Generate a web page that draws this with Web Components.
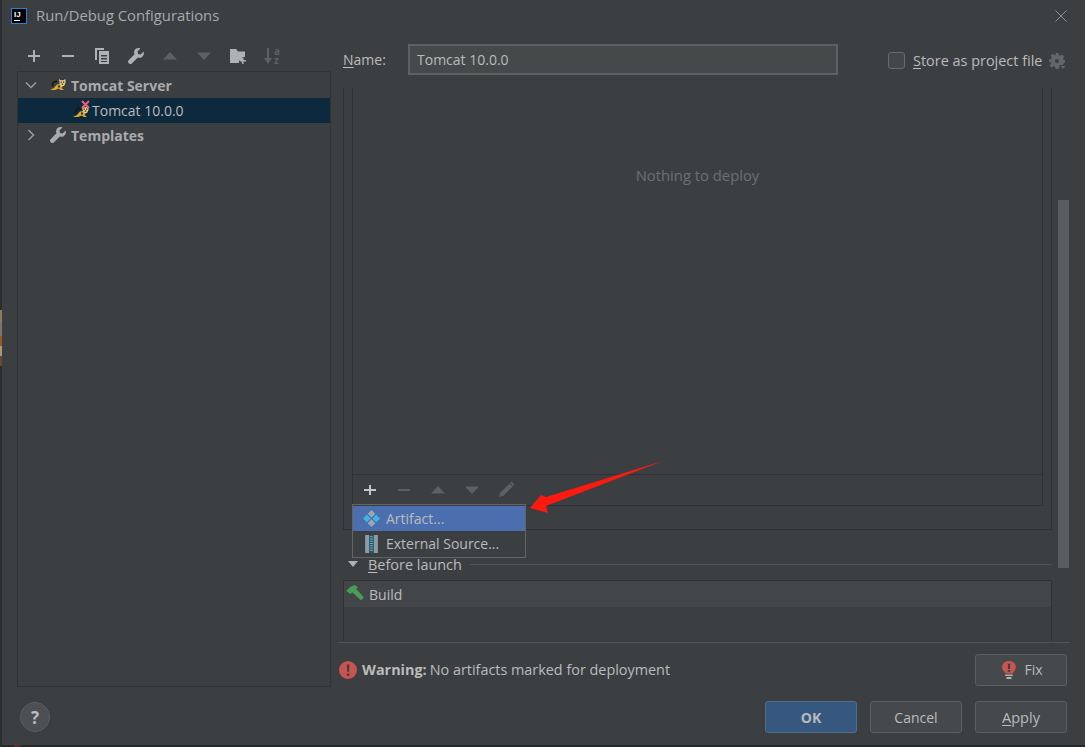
<!DOCTYPE html>
<html>
<head>
<meta charset="utf-8">
<title>Run/Debug Configurations</title>
<style>
  html, body { margin: 0; padding: 0; }
  body {
    width: 1085px; height: 747px; overflow: hidden; font-family: "Open Sans", "Liberation Sans", sans-serif;
    background:
      linear-gradient(#2b2c2d 0 310px, #8f7a5c 310px 322px, #77776f 322px 336px, #95591f 336px 346px, #a89a7a 346px 356px, #6a4a2e 356px 366px, #2b2c2d 366px) left top / 2px 747px no-repeat,
      linear-gradient(90deg, #26282a 0 14px, #5a2a2a 14px 21px, #26282a 21px) left bottom / 1085px 2px no-repeat,
      #2b2c2d;
  }
</style>
</head>
<body>
<script>
const ACTIVE = '#afb1b3';
const DIM = '#5d6163';

const ICONS = {
  plus: `<path fill="${ACTIVE}" d="M7 2h2v12H7z M2 7h12v2H2z"/>`,
  'plus-w': `<path fill="#c4c6c8" d="M7 3h2v10H7z M2 7h12v2H2z"/>`,
  minus: `<path fill="${ACTIVE}" d="M2 7h12v2H2z"/>`,
  'minus-dim': `<path fill="${DIM}" d="M2 7h12v2H2z"/>`,
  copy: `<path fill="${ACTIVE}" d="M1 0h9v2H3v10H1z"/><path fill="${ACTIVE}" fill-rule="evenodd" d="M5 3h10v13H5z M7 7v1.500h6V7z M7 10v1.500h6V10z M7 13v1h6v-1z"/>`,
  wrench: `<path fill="${ACTIVE}" d="M15.600 3.600 12.600 6.500 10 6 9.500 3.400 12.400.4C10 -.4 7.600.3 6.600 2.200 5.900 3.500 6 5 6.500 6.200L.6 12.200c-.8.8-.8 2 0 2.800l.4.4c.8.8 2 .8 2.800 0l6-6c1.300.5 2.700.5 3.900-.2 1.900-1 2.700-3.600 1.900-5.600z"/>`,
  up: `<path fill="${DIM}" d="M8 4l7 7.500H1z"/>`,
  down: `<path fill="${DIM}" d="M1 4.500h14L8 12z"/>`,
  folder: `<path fill="${ACTIVE}" d="M0 1h6l2 2.500h7V9h-3v3H9v3H0z"/><path fill="${ACTIVE}" d="M12 9.500h1.500V12H16v1.500h-2.500V16H12v-2.500H9.500V12H12z"/>`,
  pencil: `<path fill="${DIM}" d="M11.500 1.500 14.500 4.500 5 14l-4 1 1-4z M12.500.5c.6-.6 1.400-.6 2 0l1 1c.6.6.6 1.400 0 2l-.5.5-3-3z"/>`,
  close: `<path stroke="#8c8e90" stroke-width="1" fill="none" d="M2.500 2.500l11 11M13.500 2.500l-11 11"/>`,
  chevdown: `<path stroke="#9a9c9e" stroke-width="1.500" fill="none" d="M3 5.500l5 5 5-5"/>`,
  chevright: `<path stroke="#9a9c9e" stroke-width="1.500" fill="none" d="M5.500 3l5 5-5 5"/>`,
  tri: `<path fill="#afb1b3" d="M3 5h10l-5 6z"/>`,
  tomcat: `<path stroke="#141414" stroke-width="1.500" fill="none" d="M7 4.500C4 4 2 6 2.500 9.500"/>
    <path fill="#e0a92e" d="M0 13 4 11 7 7.500 10 7 13 9 11.500 11 14 13 11 13 8.500 11.500 5 13Z"/>
    <path fill="#e6cf8e" d="M9 2 10.800 3.200H13.500L15.500 2V6L14 9H11L9.500 6Z"/>
    <path fill="#3a2a10" d="M10.500 4.500h1.300v1.300h-1.300z M13 4.500h1.300v1.300H13z M11.700 6.500h1.500v1.200h-1.500z M8 8.500h2v2H8z"/>`,
  wrenchtree: `<path fill="#a9abad" d="M15.600 3.600 12.600 6.500 10 6 9.500 3.400 12.400.4C10 -.4 7.600.3 6.600 2.200 5.900 3.500 6 5 6.500 6.200L.6 12.200c-.8.8-.8 2 0 2.800l.4.4c.8.8 2 .8 2.800 0l6-6c1.300.5 2.700.5 3.900-.2 1.900-1 2.700-3.600 1.900-5.600z"/>`,
  badx: `<path stroke="#e5606f" stroke-width="2.200" fill="none" d="M1 1l7 7M8 1L1 8"/>`,
  artifact: `<path fill="#40b6e0" d="M0 8l3.600-3.600L7.200 8l-3.600 3.600z M8.800 8l3.600-3.600L16 8l-3.600 3.600z"/><path fill="#9aa7b0" d="M4.400 3.600 8 0l3.600 3.600L8 7.200z M4.400 12.400 8 8.800l3.600 3.600L8 16z"/>`,
  zip: `<path fill="#8c9aa3" d="M2 0h4v16H2z M10 0h4v16h-4z"/><path fill="#33505f" d="M6 0h4v16H6z"/><path fill="#40b6e0" d="M6.500 1h3v1h-3zM6.500 3h3v1h-3zM6.500 5h3v1h-3zM6.500 7h3v1h-3zM6.500 9h3v1h-3zM6.500 11h3v1h-3zM6.500 13h3v1h-3z"/>`,
  hammer: `<path fill="#499c54" d="M4.700 1.500 8 0l3 2-1.500 1.500L16 11l-2.500 2.500L6 6.500 4.500 8 1 5z"/>`,
  warn: `<circle cx="8" cy="8" r="8" fill="#c75450"/><path fill="#3c3f41" d="M7 3h2.200l-.3 6.500H7.300zM7 11h2.200v2.200H7z"/>`,
  bulb: `<path fill="#c75450" d="M8 0c3.300 0 5.500 2.300 5.500 5.300 0 2.500-1.500 3.700-2.500 5.700H5C4 9 2.500 7.800 2.500 5.300 2.500 2.300 4.700 0 8 0z"/><path fill="#3c3f41" d="M7 2.500h2l-.2 4.500H7.200zM7 8h2v1.600H7z"/><path fill="#afb1b3" d="M5 12h6v1.300H5zM6 14.300h4V16H6z"/>`,
  gear: `<path fill="#636567" fill-rule="evenodd" d="M6.500 0h3l.4 2.200 1.500.6L13.200 1.500l2.100 2.100-1.300 1.800.6 1.500L16 7v3l-1.400.4-.6 1.500 1 1.500-2 2-1.600-1-1.500.6L9.500 16h-3l-.4-2.200-1.500-.6-1.800 1.300L.7 12.400 2 10.600l-.6-1.500L0 9V6.500l2.200-.4.6-1.500L1.500 2.800 3.600.7l1.800 1.300 1.500-.6z M8 6a2 2 0 1 0 0 4 2 2 0 0 0 0-4z"/><path fill="#3c3f41" d="M10.500 12h6.500v5h-6.500z"/><path fill="#636567" d="M11.500 13h5l-2.500 3z"/>`,
};

class IdeIcon extends HTMLElement {
  connectedCallback() {
    const size = this.getAttribute('size') || 16;
    const h = this.getAttribute('h') || size;
    const vb = this.getAttribute('vb') || '0 0 16 16';
    this.attachShadow({ mode: 'open' }).innerHTML = `
      <style>:host { display: inline-flex; flex: none; width: ${size}px; height: ${h}px; } svg { display: block; overflow: visible; }</style>
      <svg width="${size}" height="${h}" viewBox="${vb}" preserveAspectRatio="none">${ICONS[this.getAttribute('name')] || ''}</svg>`;
  }
}
customElements.define('ide-icon', IdeIcon);

class IdeButton extends HTMLElement {
  constructor() {
    super();
    this.attachShadow({ mode: 'open' }).innerHTML = `
      <style>
        :host { display: flex; box-sizing: border-box; width: 92px; height: 32px; align-items: center; justify-content: center; gap: 5px;
          background: #45494b; border: 1px solid #5b5e60; border-radius: 3px; color: #bbbbbb; font-size: 14px; }
        :host([primary]) { background: #365880; border-color: #4c708c; font-weight: 700; }
      </style>
      <slot></slot>`;
  }
}
customElements.define('ide-button', IdeButton);

class TitleBar extends HTMLElement {
  constructor() {
    super();
    this.attachShadow({ mode: 'open' }).innerHTML = `
      <style>
        :host { display: flex; align-items: center; height: 32px; flex: none; padding: 0 16px 0 9px; color: #a8aaac; font-size: 14.8px; }
        .logo { box-sizing: border-box; width: 16px; height: 16px; background: #000; border: 1px solid #2b7fd6; color: #fff; font: 700 8px/9px "Liberation Sans", sans-serif; padding: 1px 0 0 2px; margin-right: 9px; position: relative; }
        .logo::after { content: ""; position: absolute; left: 2px; bottom: 2px; width: 6px; height: 1px; background: #fff; }
        .t { flex: 1; position: relative; top: -1px; }
      </style>
      <div class="logo">IJ</div>
      <div class="t">Run/Debug Configurations</div>
      <ide-icon name="close" size="16"></ide-icon>`;
  }
}
customElements.define('title-bar', TitleBar);

// icon strip: buttons are 34px apart
class IconStrip extends HTMLElement {
  constructor() {
    super();
    this.attachShadow({ mode: 'open' }).innerHTML = `
      <style>
        :host { display: flex; align-items: center; gap: var(--strip-gap, 18px); }
      </style>
      <slot></slot>`;
  }
}
customElements.define('icon-strip', IconStrip);

class TreeRow extends HTMLElement {
  constructor() {
    super();
    this.attachShadow({ mode: 'open' }).innerHTML = `
      <style>
        :host { display: flex; align-items: center; height: 25px; color: #bbbbbb; font-size: 14px; }
        :host([bold]) { font-weight: 700; color: #a9abad; }
        :host([selected]) { background: #0d293e; }
      </style>
      <slot></slot>`;
  }
}
customElements.define('tree-row', TreeRow);

class ConfigTree extends HTMLElement {
  constructor() {
    super();
    this.attachShadow({ mode: 'open' }).innerHTML = `
      <style>
        :host { display: flex; flex-direction: column; box-sizing: border-box; width: 314px; height: 617px; border: 1px solid #313335; padding-top: 1px; }
        .ind { width: 5px; flex: none; }
        .gap { width: 11px; flex: none; }
        .badged { position: relative; margin: 3px 3px 0 55px; display: flex; flex: none; }
        .badged .x { position: absolute; left: 8px; top: -4px; }
      </style>
      <tree-row bold><span class="ind"></span><ide-icon name="chevdown" size="16"></ide-icon><span class="gap"></span><ide-icon name="tomcat" size="16" style="margin-right:5px"></ide-icon>Tomcat Server</tree-row>
      <tree-row selected><span class="badged"><ide-icon name="tomcat" size="16"></ide-icon><ide-icon class="x" name="badx" size="9" h="9" vb="0 0 9 9"></ide-icon></span><span>Tomcat 10.0.0</span></tree-row>
      <tree-row bold><span class="ind"></span><ide-icon name="chevright" size="16"></ide-icon><span class="gap"></span><ide-icon name="wrenchtree" size="16" style="margin-right:5px"></ide-icon>Templates</tree-row>`;
  }
}
customElements.define('config-tree', ConfigTree);

class LeftPane extends HTMLElement {
  constructor() {
    super();
    this.attachShadow({ mode: 'open' }).innerHTML = `
      <style>
        :host { display: flex; flex-direction: column; flex: none; width: 336px; padding-left: 15px; box-sizing: border-box; }
        icon-strip { box-sizing: border-box; height: 39px; padding: 9px 0 0 9px; }
        .sort { position: relative; width: 16px; height: 16px; flex: none; color: #5d6163; font: 700 10px/9px "Open Sans", sans-serif; }
        .sort svg { position: absolute; left: 0; top: 0; }
        .sort span { position: absolute; left: 10px; top: -1px; white-space: pre-line; }
      </style>
      <icon-strip>
        <ide-icon name="plus"></ide-icon>
        <ide-icon name="minus"></ide-icon>
        <ide-icon name="copy"></ide-icon>
        <ide-icon name="wrench"></ide-icon>
        <ide-icon name="up"></ide-icon>
        <ide-icon name="down"></ide-icon>
        <ide-icon name="folder"></ide-icon>
        <div class="sort">
          <svg width="8" height="16" viewBox="0 0 8 16"><path fill="#5d6163" d="M3 0h2v10h3l-4 6-4-6h3z"/></svg>
          <span>a
z</span>
        </div>
      </icon-strip>
      <config-tree></config-tree>`;
  }
}
customElements.define('left-pane', LeftPane);

class NameRow extends HTMLElement {
  constructor() {
    super();
    this.attachShadow({ mode: 'open' }).innerHTML = `
      <style>
        :host { display: flex; align-items: center; height: 31px; margin-top: 12px; flex: none; color: #bbbbbb; font-size: 14px; padding-left: 5px; }
        .lbl { width: 65px; flex: none; }
        .input { box-sizing: border-box; width: 430px; height: 31px; background: #45494a; border: 2px solid #5e6162; color: #bbbbbb; display: flex; align-items: center; padding-left: 7px; flex: none; }
        .store { display: flex; align-items: center; margin-left: 50px; padding-top: 2px; font-size: 14.45px; }
        .check { box-sizing: border-box; width: 17px; height: 17px; border: 1px solid #6b6b6b; border-radius: 3px; background: #43474a; margin-right: 8px; }
        u { text-underline-offset: 2px; }
        ide-icon { margin-left: 7px; }
      </style>
      <div class="lbl"><u>N</u>ame:</div>
      <div class="input">Tomcat 10.0.0</div>
      <div class="store"><div class="check"></div><span><u>S</u>tore as project file</span><ide-icon name="gear"></ide-icon></div>`;
  }
}
customElements.define('name-row', NameRow);

class DeployBox extends HTMLElement {
  constructor() {
    super();
    this.attachShadow({ mode: 'open' }).innerHTML = `
      <style>
        :host { display: block; box-sizing: border-box; width: 709px; height: 442px; margin-left: 5px; border: solid #2f3133; border-width: 0 1px 1px 1px; padding: 0 8px; flex: none; position: relative; }
        .inner { box-sizing: border-box; height: 418px; border: solid #2f3133; border-width: 0 1px 1px 1px; display: flex; flex-direction: column; }
        .empty { flex: 1; text-align: center; color: #6d6f71; font-size: 14.8px; padding-top: 77px; box-sizing: border-box; }
        icon-strip { flex: none; height: 30px; border-top: 1px solid #2f3133; padding-left: 9px; --strip-gap: 18px; }
        .menu { position: absolute; left: 8px; top: 416px; width: 174px; box-sizing: border-box; height: 54px; background: #3c3f41; border: 1px solid #646464; padding: 1px 0; z-index: 3; color: #bbbbbb; font-size: 14px; }
        .item { display: flex; align-items: center; height: 25px; padding-left: 10px; gap: 6px; }
        .item.on { background: #4b6eaf; }
      </style>
      <div class="inner">
        <div class="empty">Nothing to deploy</div>
        <icon-strip>
          <ide-icon name="plus-w"></ide-icon>
          <ide-icon name="minus-dim"></ide-icon>
          <ide-icon name="up"></ide-icon>
          <ide-icon name="down"></ide-icon>
          <ide-icon name="pencil"></ide-icon>
        </icon-strip>
      </div>
      <div class="menu">
        <div class="item on"><ide-icon name="artifact" size="17"></ide-icon>Artifact...</div>
        <div class="item"><ide-icon name="zip" size="17" h="18"></ide-icon>External Source...</div>
      </div>`;
  }
}
customElements.define('deploy-box', DeployBox);

class BeforeLaunch extends HTMLElement {
  constructor() {
    super();
    this.attachShadow({ mode: 'open' }).innerHTML = `
      <style>
        :host { display: block; flex: none; margin-left: 5px; color: #bbbbbb; font-size: 14px; width: 709px; }
        .head { display: flex; align-items: center; height: 22px; margin-top: 23px; font-size: 14.45px; }
        .head ide-icon { margin-right: 7px; margin-left: 2px; }
        .head hr { flex: 1; height: 1px; border: 0; background: #515456; margin: 0 0 0 8px; }
        u { text-underline-offset: 2px; }
        .list { box-sizing: border-box; height: 61px; margin-top: 5px; border: solid #2f3133; border-width: 1px 1px 0 1px; }
        .row { display: flex; align-items: center; height: 26px; background: #424648; gap: 5px; padding-left: 1px; }
      </style>
      <div class="head"><ide-icon name="tri"></ide-icon><span><u>B</u>efore launch</span><hr></div>
      <div class="list"><div class="row"><ide-icon name="hammer" size="19" h="18"></ide-icon>Build</div></div>`;
  }
}
customElements.define('before-launch', BeforeLaunch);

class RightPane extends HTMLElement {
  constructor() {
    super();
    this.attachShadow({ mode: 'open' }).innerHTML = `
      <style>
        :host { display: flex; flex-direction: column; flex: none; width: 732px; }
        .scroller { position: relative; flex: none; height: 554px; margin-top: 13px; border-bottom: 1px solid #515456; display: flex; flex-direction: column; box-sizing: content-box; }
        .thumb { position: absolute; left: 720px; top: 112px; width: 11px; height: 368px; background: #5a5d5f; }
        .warn { display: flex; align-items: center; height: 31px; margin-top: 11px; color: #bbbbbb; font-size: 14.4px; padding-left: 1px; }
        .warn > ide-icon { margin-right: 5px; }
        .warn b { margin-right: 3px; }
        .warn span { flex: 1; }
        .warn ide-button { margin-right: 3px; }
      </style>
      <name-row></name-row>
      <div class="scroller">
        <deploy-box></deploy-box>
        <before-launch></before-launch>
        <div class="thumb"></div>
      </div>
      <div class="warn"><ide-icon name="warn" size="18"></ide-icon><b>Warning:</b><span>No artifacts marked for deployment</span><ide-button><ide-icon name="bulb" size="20" h="18"></ide-icon>Fix</ide-button></div>`;
  }
}
customElements.define('right-pane', RightPane);

class DialogFooter extends HTMLElement {
  constructor() {
    super();
    this.attachShadow({ mode: 'open' }).innerHTML = `
      <style>
        :host { display: flex; align-items: flex-start; gap: 13px; flex: none; height: 58px; padding: 14px 18px 0 18px; box-sizing: border-box; }
        .help { box-sizing: border-box; width: 30px; height: 30px; margin-top: 1px; border-radius: 50%; background: #4c5052; border: 1px solid #5b5e60; color: #bbbbbb; font-weight: 700; font-size: 17px; display: flex; align-items: center; justify-content: center; margin-right: auto; }
        u { text-underline-offset: 2px; }
        .apply { font-size: 14.5px; }
      </style>
      <div class="help">?</div>
      <ide-button primary>OK</ide-button>
      <ide-button>Cancel</ide-button>
      <ide-button><span class="apply"><u>A</u>pply</span></ide-button>`;
  }
}
customElements.define('dialog-footer', DialogFooter);

class RunDialog extends HTMLElement {
  constructor() {
    super();
    this.attachShadow({ mode: 'open' }).innerHTML = `
      <style>
        :host { display: flex; flex-direction: column; box-sizing: border-box; width: 1083px; height: 745px; margin-left: 2px; background: #3c3f41; position: relative; }
        .main { display: flex; flex: 1; min-height: 0; }
        .arrow { position: absolute; left: -2px; top: 0; pointer-events: none; z-index: 5; }
      </style>
      <title-bar></title-bar>
      <div class="main"><left-pane></left-pane><right-pane></right-pane></div>
      <dialog-footer></dialog-footer>
      <svg class="arrow" width="1085" height="747"><path fill="#fb1a10" d="M663 461 546 497 541 495 530 508 548 513 546 506z"/></svg>`;
  }
}
customElements.define('run-dialog', RunDialog);
</script>
<run-dialog></run-dialog>
</body>
</html>
